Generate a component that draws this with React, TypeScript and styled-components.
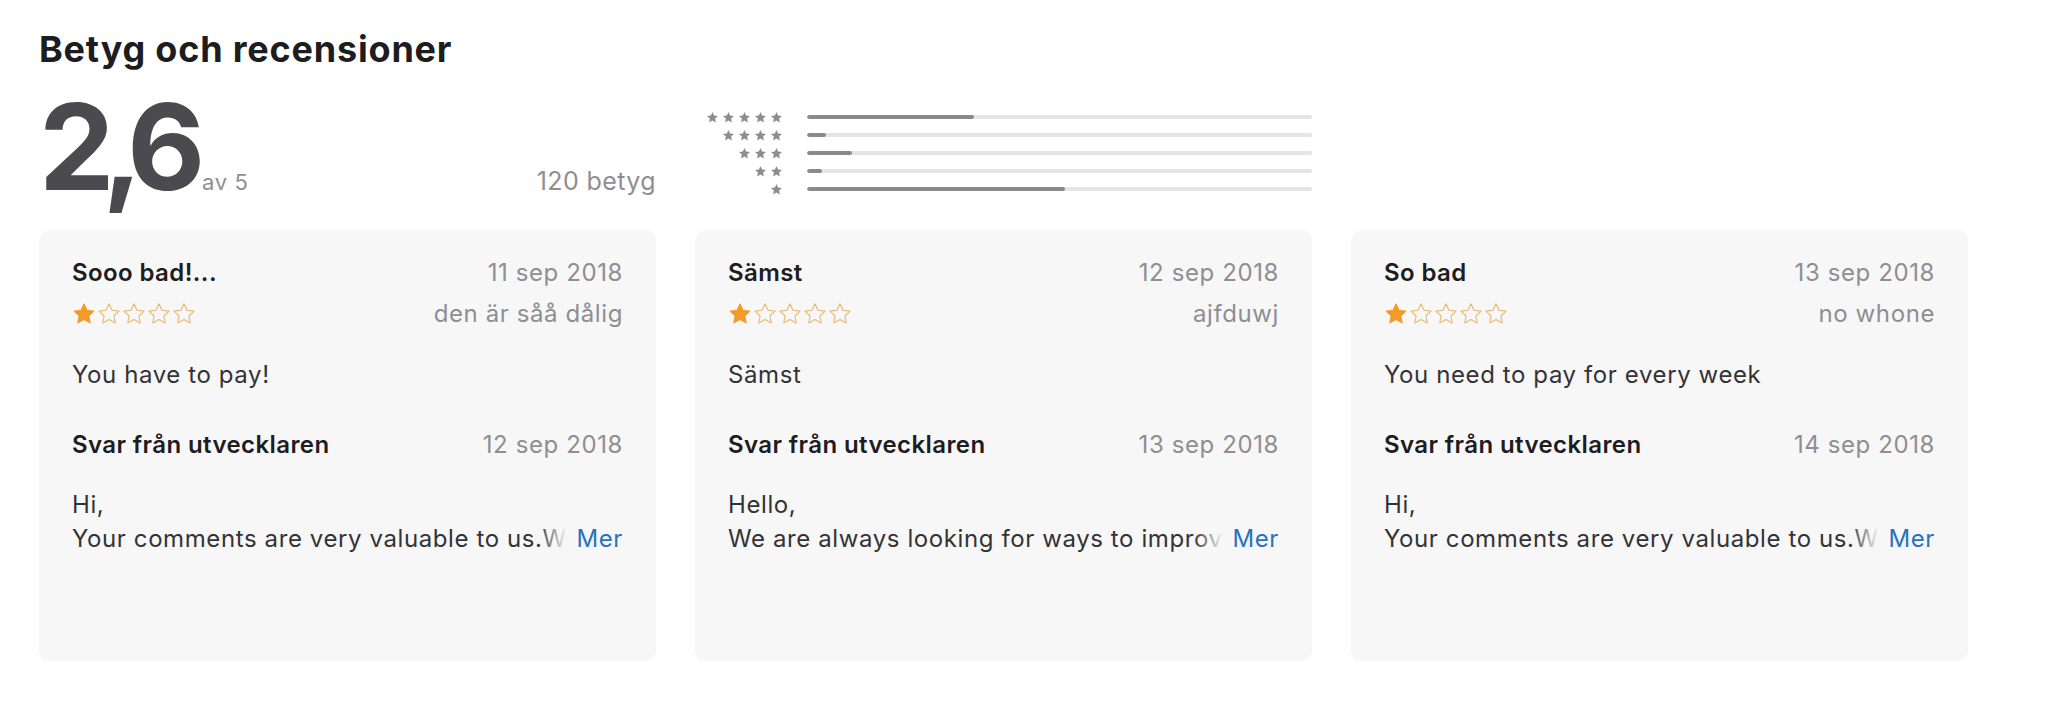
import React from 'react';
import styled, { createGlobalStyle } from 'styled-components';

const GlobalStyle = createGlobalStyle`
  html, body { margin: 0; padding: 0; background: #ffffff; }
  body {
    font-family: Inter, "Noto Sans", "Liberation Sans", sans-serif;
    -webkit-font-smoothing: antialiased;
    color: #1d1d1f;
  }
`;

const Page = styled.main`
  width: 1929px;
  padding: 29px 0 0 39px;
`;

const Title = styled.h2`
  margin: 0;
  font-size: 36px;
  line-height: 40px;
  font-weight: 700;
  letter-spacing: 0.8px;
  color: #1d1d1f;
`;

const Columns = styled.div`
  display: grid;
  grid-template-columns: repeat(3, minmax(0, 1fr));
  column-gap: 39px;
`;

const Summary = styled(Columns)`
  margin-top: 18px;
  height: 120px;
`;

const ScoreBlock = styled.div`
  display: flex;
  align-items: baseline;
`;

const BigScore = styled.span`
  font-size: 120px;
  line-height: 120px;
  font-weight: 700;
  letter-spacing: -12px;
  color: #4a4a4f;
`;

const OutOf = styled.span`
  margin-left: 9px;
  font-size: 22px;
  letter-spacing: 0.6px;
  color: #8e8e93;
`;

const Count = styled.span`
  margin-left: auto;
  font-size: 25px;
  letter-spacing: 0.4px;
  color: #8e8e93;
`;

const Histogram = styled.div`
  padding-top: 21px;
  display: flex;
  flex-direction: column;
`;

const HistRow = styled.div`
  display: flex;
  align-items: center;
  height: 18px;
`;

const HistStars = styled.div`
  width: 88px;
  display: flex;
  justify-content: flex-end;
  gap: 3px;
`;

const Track = styled.div`
  flex: 1;
  margin-left: 24px;
  height: 4px;
  border-radius: 2px;
  background: #e5e5e5;
  overflow: hidden;
`;

const Fill = styled.div`
  height: 100%;
  background: #8a8a8a;
  border-radius: 2px;
`;

const Cards = styled(Columns)`
  margin-top: 23px;
`;

const Card = styled.article`
  height: 431px;
  box-sizing: border-box;
  padding: 28px 33px;
  background: #f7f7f7;
  border-radius: 10px;
  font-size: 24px;
  letter-spacing: 0.6px;
`;

const Line = styled.div<{ $gap?: number }>`
  display: flex;
  justify-content: space-between;
  align-items: center;
  height: 30px;
  line-height: 30px;
  margin-top: ${(p) => p.$gap ?? 0}px;
`;

const Strong = styled.span`
  font-weight: 600;
  letter-spacing: 0.4px;
  color: #1d1d1f;
`;

const Muted = styled.span`
  color: #8e8e93;
`;

const Body = styled.p<{ $gap: number }>`
  margin: ${(p) => p.$gap}px 0 0;
  line-height: 30px;
  color: #333336;
`;

const Reply = styled.div`
  margin-top: 28px;
  line-height: 34px;
  color: #333336;
`;

const ReplyLine = styled.div`
  display: flex;
  align-items: center;
`;

const Clip = styled.span`
  flex: 1;
  min-width: 0;
  overflow: hidden;
  white-space: nowrap;
  position: relative;
  &::after {
    content: '';
    position: absolute;
    top: 0;
    right: 0;
    bottom: 0;
    width: 36px;
    background: linear-gradient(to right, rgba(247, 247, 247, 0), #f7f7f7 80%);
  }
`;

const More = styled.a`
  margin-left: 2px;
  color: #2a72c0;
  text-decoration: none;
  cursor: pointer;
`;

const RatingStars = styled.div`
  display: flex;
  gap: 1px;
`;

const STAR = 'M12 1.8l3.05 6.5 7.05.85-5.2 4.85 1.35 7L12 17.5l-6.25 3.5 1.35-7L1.9 9.15l7.05-.85z';

const SmallStar = () => (
  <svg width="13" height="13" viewBox="0 0 24 24" aria-hidden>
    <path d={STAR} fill="#8e8e8e" />
  </svg>
);

const RateStar = ({ filled }: { filled: boolean }) => (
  <svg width="24" height="24" viewBox="0 0 24 24" aria-hidden>
    <path
      d={STAR}
      fill={filled ? '#f39a2b' : 'none'}
      stroke={filled ? '#f39a2b' : '#e8b870'}
      strokeWidth={filled ? 1 : 1.1}
      strokeLinejoin="round"
    />
  </svg>
);

const dist = [
  { stars: 5, pct: 33 },
  { stars: 4, pct: 3.8 },
  { stars: 3, pct: 9 },
  { stars: 2, pct: 3 },
  { stars: 1, pct: 51 },
];

type Review = {
  title: string;
  date: string;
  author: string;
  body: string;
  replyDate: string;
  greeting: string;
  reply: string;
};

const reviews: Review[] = [
  {
    title: 'Sooo bad!...',
    date: '11 sep 2018',
    author: 'den är såå dålig',
    body: 'You have to pay!',
    replyDate: '12 sep 2018',
    greeting: 'Hi,',
    reply: 'Your comments are very valuable to us.We will keep improving the app for you.',
  },
  {
    title: 'Sämst',
    date: '12 sep 2018',
    author: 'ajfduwj',
    body: 'Sämst',
    replyDate: '13 sep 2018',
    greeting: 'Hello,',
    reply: 'We are always looking for ways to improve our app and your feedback helps.',
  },
  {
    title: 'So bad',
    date: '13 sep 2018',
    author: 'no whone',
    body: 'You need to pay for every week',
    replyDate: '14 sep 2018',
    greeting: 'Hi,',
    reply: 'Your comments are very valuable to us.We will keep improving the app for you.',
  },
];

const ReviewCard = ({ r }: { r: Review }) => (
  <Card>
    <Line>
      <Strong>{r.title}</Strong>
      <Muted>{r.date}</Muted>
    </Line>
    <Line $gap={11}>
      <RatingStars>
        {[0, 1, 2, 3, 4].map((i) => (
          <RateStar key={i} filled={i === 0} />
        ))}
      </RatingStars>
      <Muted>{r.author}</Muted>
    </Line>
    <Body $gap={31}>{r.body}</Body>
    <Line $gap={40}>
      <Strong>Svar från utvecklaren</Strong>
      <Muted>{r.replyDate}</Muted>
    </Line>
    <Reply>
      <div>{r.greeting}</div>
      <ReplyLine>
        <Clip>{r.reply}</Clip>
        <More>Mer</More>
      </ReplyLine>
    </Reply>
  </Card>
);

export default function App() {
  return (
    <>
      <GlobalStyle />
      <Page>
        <Title>Betyg och recensioner</Title>
        <Summary>
          <ScoreBlock>
            <BigScore>2,6</BigScore>
            <OutOf>av 5</OutOf>
            <Count>120 betyg</Count>
          </ScoreBlock>
          <Histogram>
            {dist.map((d) => (
              <HistRow key={d.stars}>
                <HistStars>
                  {Array.from({ length: d.stars }).map((_, i) => (
                    <SmallStar key={i} />
                  ))}
                </HistStars>
                <Track>
                  <Fill style={{ width: `${d.pct}%` }} />
                </Track>
              </HistRow>
            ))}
          </Histogram>
          <div />
        </Summary>
        <Cards>
          {reviews.map((r) => (
            <ReviewCard key={r.date} r={r} />
          ))}
        </Cards>
      </Page>
    </>
  );
}
